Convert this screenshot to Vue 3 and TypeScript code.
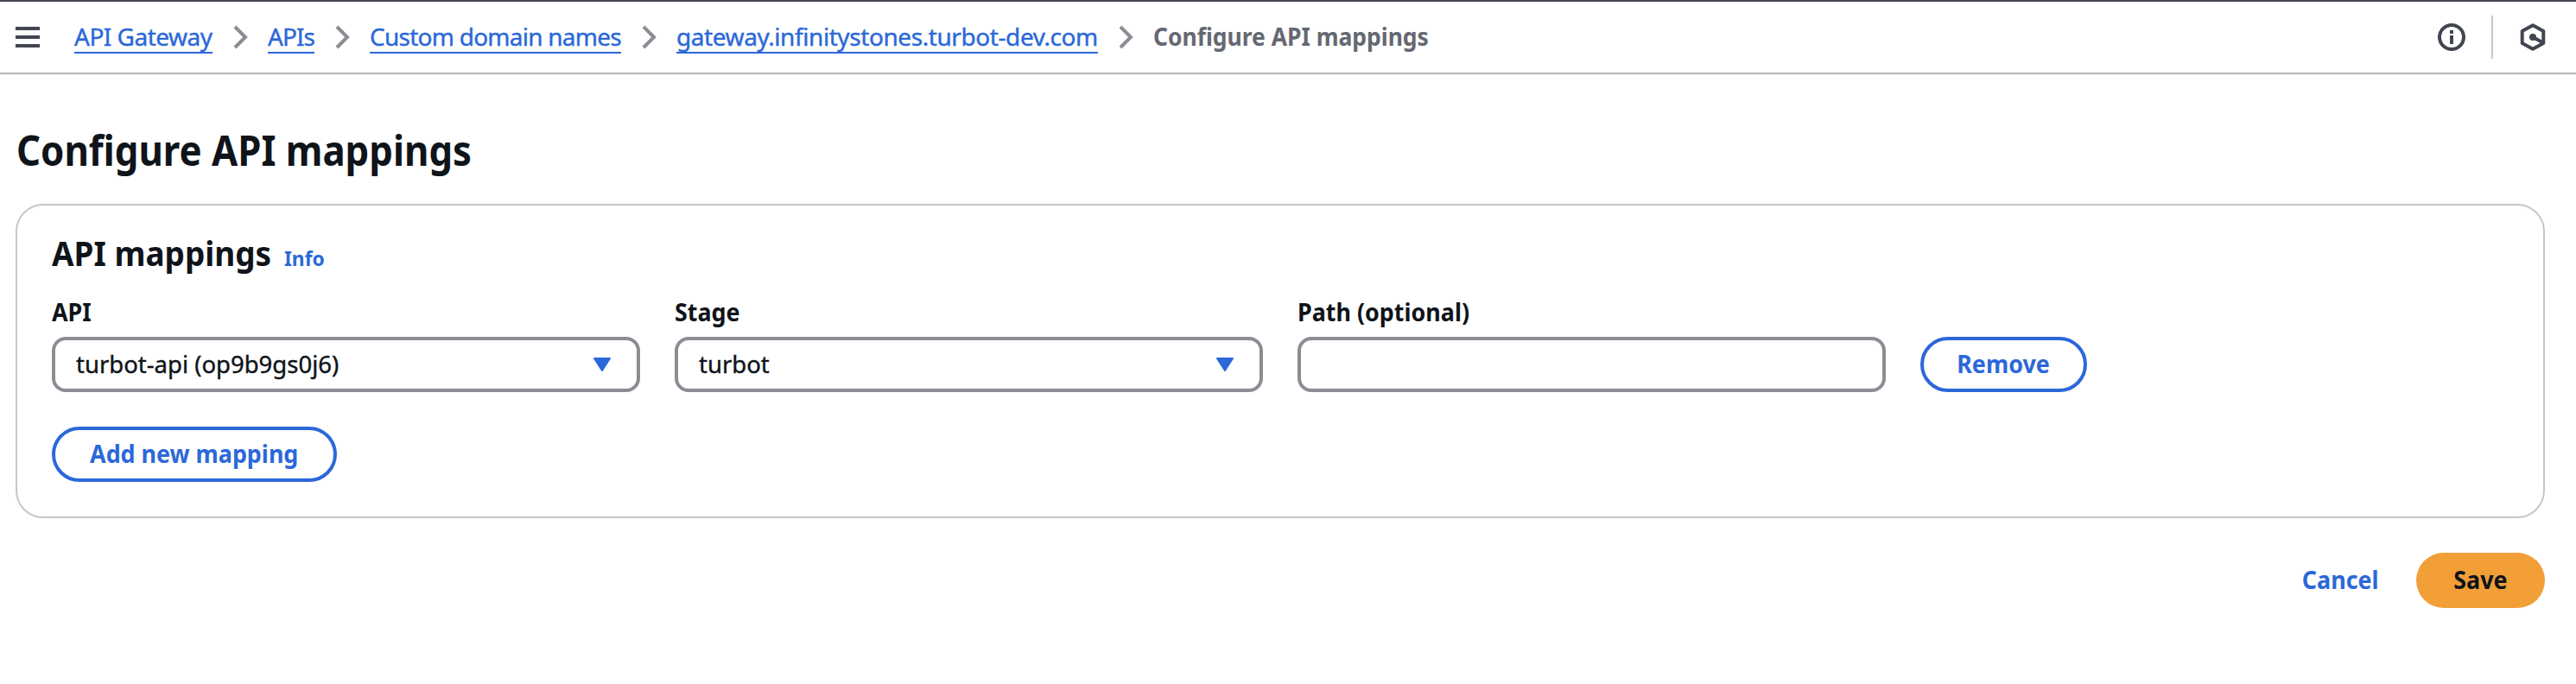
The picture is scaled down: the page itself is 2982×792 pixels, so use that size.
<script setup lang="ts">
import { ref } from 'vue'

interface Crumb {
  text: string
  kind: string
}

interface Mapping {
  api: string
  stage: string
  path: string
}

const crumbs: Crumb[] = [
  { text: 'API Gateway', kind: 'service' },
  { text: 'APIs', kind: 'apis' },
  { text: 'Custom domain names', kind: 'domains' },
  { text: 'gateway.infinitystones.turbot-dev.com', kind: 'host' },
]

const mappings = ref<Mapping[]>([{ api: 'turbot-api (op9b9gs0j6)', stage: 'turbot', path: '' }])

function addMapping(): void {
  mappings.value.push({ api: '', stage: '', path: '' })
}

function removeMapping(index: number): void {
  mappings.value.splice(index, 1)
}
</script>

<template>
  <div class="page">
    <header class="topbar">
      <button class="menu" type="button" aria-label="Menu">
        <svg width="28" height="24" viewBox="0 0 28 24"><path d="M0 2h28M0 12h28M0 22h28" stroke="#424650" stroke-width="4" /></svg>
      </button>
      <nav class="crumbs">
        <template v-for="crumb in crumbs" :key="crumb.kind">
          <a class="crumb" :class="crumb.kind">{{ crumb.text }}</a>
          <svg class="chevron" width="18" height="28" viewBox="0 0 18 28" fill="none">
            <path d="M2 2l12 12L2 26" stroke="#8c8c94" stroke-width="4" />
          </svg>
        </template>
        <span class="current">Configure API mappings</span>
      </nav>
      <div class="tools">
        <svg width="32" height="32" viewBox="0 0 32 32" fill="none">
          <circle cx="16" cy="16" r="14" stroke="#424650" stroke-width="4" />
          <path d="M14 8h4v4h-4zM14 14h4v10h-4z" fill="#424650" />
        </svg>
        <span class="divider"></span>
        <svg width="32" height="32" viewBox="0 0 32 32" fill="none" stroke="#424650" stroke-width="4" stroke-linejoin="round">
          <path d="M16 2.3L28.3 9v14L16 29.7 3.7 23V9z" />
          <path d="M16 16l12 6.6" />
          <circle cx="16" cy="16" r="4" fill="#424650" stroke="none" />
        </svg>
      </div>
    </header>

    <main class="content">
      <h1 class="title">Configure API mappings</h1>
      <section class="card">
        <div class="card-head">
          <h2>API mappings</h2>
          <a class="info">Info</a>
        </div>
        <div v-for="(mapping, i) in mappings" :key="i" class="row">
          <div class="field">
            <span class="label">API</span>
            <div class="control">
              <span class="value">{{ mapping.api }}</span>
              <svg class="caret" width="22" height="18" viewBox="0 0 22 18"><path d="M2 2h18l-9 14z" /></svg>
            </div>
          </div>
          <div class="field">
            <span class="label">Stage</span>
            <div class="control">
              <span class="value">{{ mapping.stage }}</span>
              <svg class="caret" width="22" height="18" viewBox="0 0 22 18"><path d="M2 2h18l-9 14z" /></svg>
            </div>
          </div>
          <div class="field">
            <span class="label">Path (optional)</span>
            <input v-model="mapping.path" class="control" type="text" aria-label="Path" />
          </div>
          <button class="btn remove" type="button" @click="removeMapping(i)"><span>Remove</span></button>
        </div>
        <button class="btn add" type="button" @click="addMapping"><span>Add new mapping</span></button>
      </section>
      <footer class="actions">
        <button class="btn cancel" type="button"><span>Cancel</span></button>
        <button class="btn save" type="button"><span>Save</span></button>
      </footer>
    </main>
  </div>
</template>

<style>
body {
  background: #fff;
}
</style>

<style scoped>
.page,
.page * {
  box-sizing: border-box;
}
.page {
  height: 792px;
  overflow: hidden;
  background: #fff;
  color: #0f141a;
  font-family: 'Noto Sans', 'Open Sans', sans-serif;
  font-size: 28px;
}
button {
  font: inherit;
  padding: 0;
  border: 0;
  background: none;
}
svg {
  display: block;
  flex: none;
}
.topbar {
  display: flex;
  align-items: center;
  height: 86px;
  padding: 0 34px 0 18px;
  border-top: 2px solid #424650;
  border-bottom: 2px solid #b4b4bb;
}
.menu {
  margin-right: 40px;
}
.crumbs {
  display: flex;
  align-items: center;
}
.crumb {
  height: 38px;
  line-height: 36px;
  border-bottom: 2px solid #2b68d9;
  color: #2b68d9;
  white-space: nowrap;
  -webkit-text-stroke: 0.4px currentColor;
}
.service {
  width: 160px;
  letter-spacing: -0.5px;
}
.apis {
  width: 54px;
  letter-spacing: -0.9px;
}
.domains {
  width: 291px;
  letter-spacing: -0.75px;
}
.host {
  width: 488px;
  letter-spacing: -0.42px;
}
.chevron {
  margin: 0 22px 0 24px;
}
.current {
  line-height: 36px;
  margin-bottom: 2px;
  color: #656871;
  font-weight: 700;
  white-space: nowrap;
  transform: scaleX(0.945);
  transform-origin: left;
}
.tools {
  display: flex;
  align-items: center;
  margin-left: auto;
}
.divider {
  width: 2px;
  height: 50px;
  margin: 0 30px;
  background: #c6c6cd;
}
.content {
  padding: 58px 36px 0 18px;
}
h1,
h2 {
  margin: 0;
}
.title {
  width: max-content;
  height: 92px;
  margin-left: 1px;
  font-size: 48px;
  line-height: 60px;
  transform: scaleX(0.911);
  transform-origin: left;
}
.card {
  height: 364px;
  padding: 30px 40px;
  border: 2px solid #c6c6cd;
  border-radius: 32px;
}
.card-head {
  display: flex;
  align-items: baseline;
  height: 50px;
  margin-bottom: 23px;
}
h2 {
  width: 254px;
  font-size: 40px;
  line-height: 50px;
  white-space: nowrap;
  transform: scaleX(0.923);
  transform-origin: left;
}
.info {
  margin-left: 15px;
  color: #2b68d9;
  font-size: 24px;
  font-weight: 700;
  line-height: 32px;
  transform: scaleX(0.95);
  transform-origin: left;
}
.row {
  display: grid;
  grid-template-columns: repeat(4, 1fr);
  column-gap: 40px;
  align-items: end;
  margin-bottom: 40px;
}
.label {
  display: block;
  width: max-content;
  margin-bottom: 9px;
  font-weight: 700;
  line-height: 40px;
  transform: scaleX(0.96);
  transform-origin: left;
}
.control {
  display: flex;
  align-items: center;
  justify-content: space-between;
  width: 100%;
  height: 64px;
  padding: 0 29px 2px 24px;
  border: 4px solid #8c8c94;
  border-radius: 16px;
  background: #fff;
  color: inherit;
  font: inherit;
  outline: none;
}
.value {
  -webkit-text-stroke: 0.4px currentColor;
  transform: scaleX(0.982);
  transform-origin: left;
}
.caret {
  margin-top: 1px;
  fill: #2b68d9;
  stroke: #2b68d9;
  stroke-width: 2;
  stroke-linejoin: round;
}
.btn {
  display: flex;
  align-items: center;
  justify-content: center;
  height: 64px;
  padding-bottom: 2px;
  border-radius: 32px;
  color: #2b68d9;
  font-weight: 700;
}
.btn span {
  transform: scaleX(0.96);
}
.remove {
  width: 193px;
  border: 4px solid #2b68d9;
}
.add {
  width: 330px;
  border: 4px solid #2b68d9;
}
.actions {
  display: flex;
  justify-content: flex-end;
  padding-top: 40px;
}
.cancel {
  width: 176px;
}
.save {
  width: 149px;
  background: #f29f38;
  color: #0f141a;
}
</style>
